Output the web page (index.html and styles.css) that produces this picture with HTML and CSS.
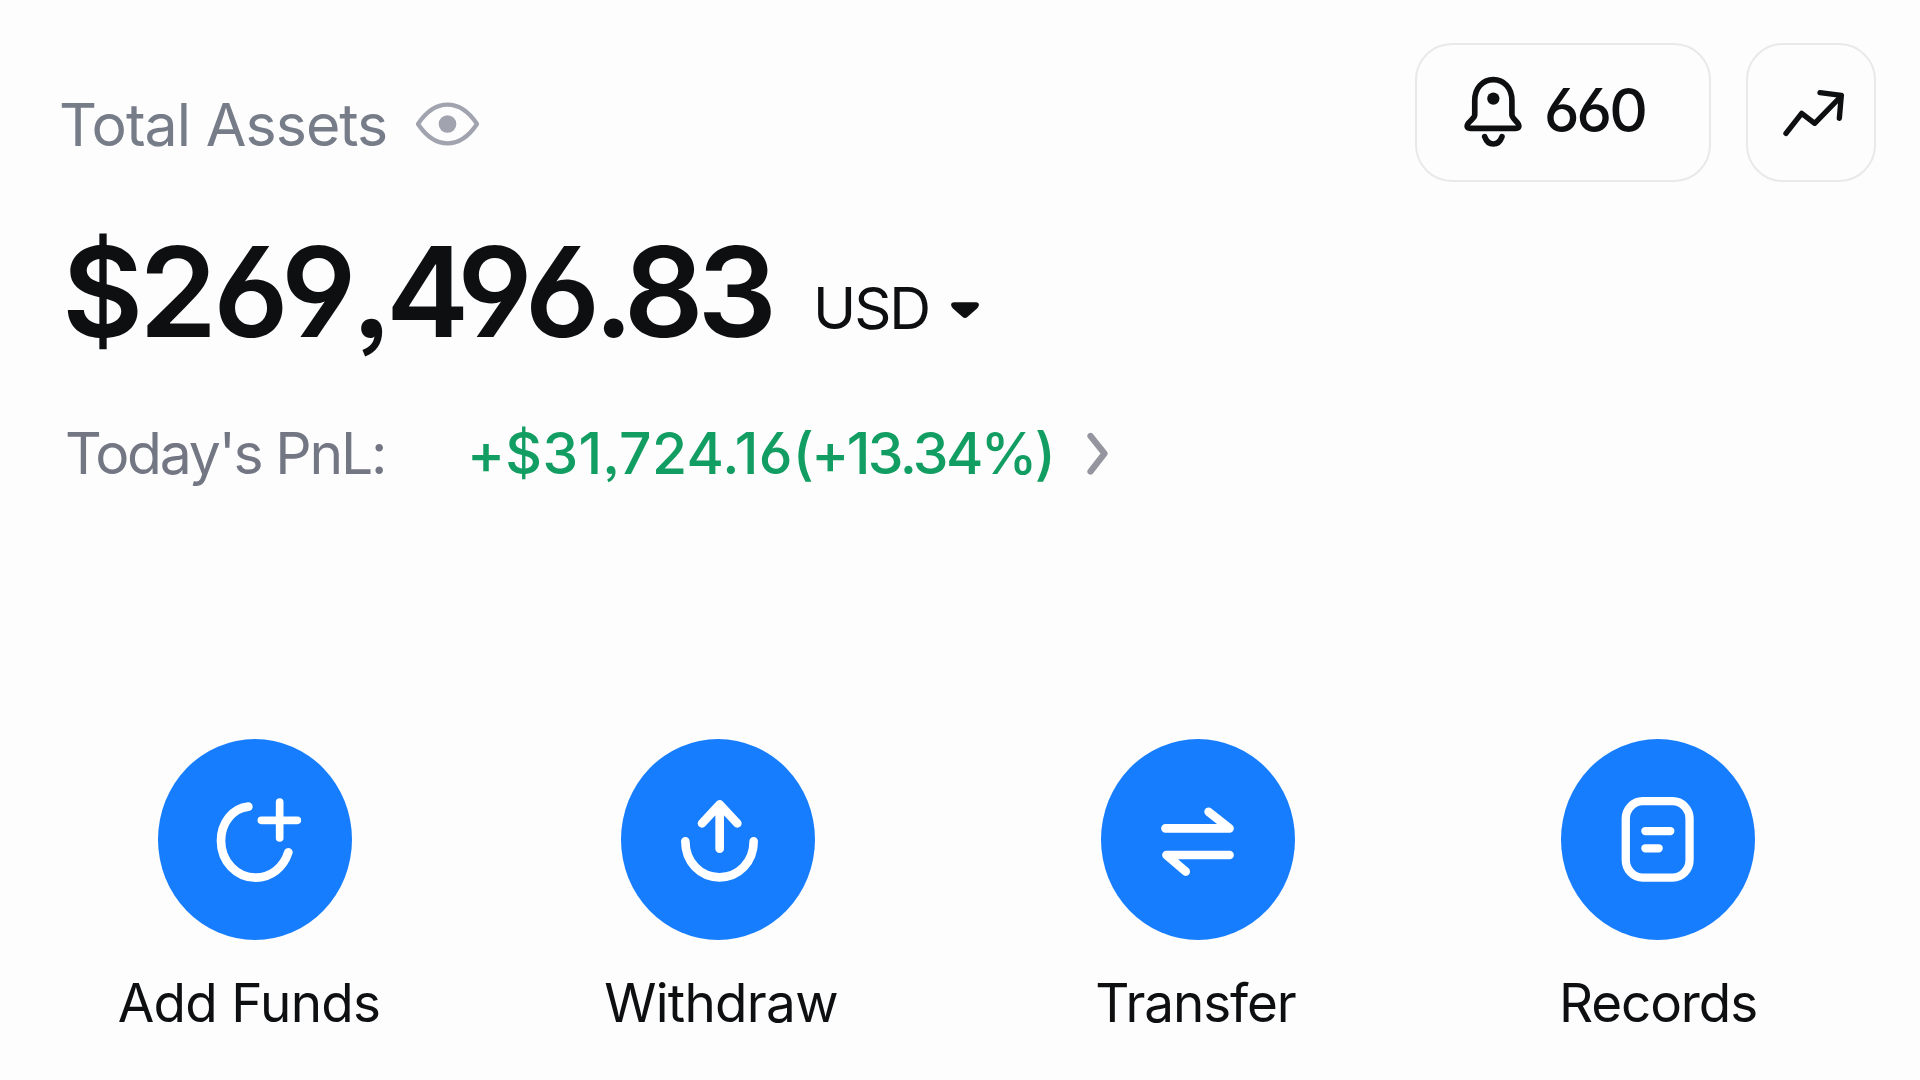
FILE: index.html
```html
<!DOCTYPE html>
<html lang="en">
<head>
<meta charset="utf-8">
<title>Assets</title>
<link rel="stylesheet" href="styles.css">
</head>
<body>
<main class="page">
  <header class="header">
    <div class="heading">
      <span class="heading-text">Total Assets</span>
      <svg class="eye" viewBox="0 0 189 132" fill="none">
        <path d="M6 66C30 30 60 8 94.500 8S159 30 183 66C159 102 129 124 94.500 124S30 102 6 66Z" stroke="#a1a4ae" stroke-width="13" stroke-linejoin="round"/>
        <circle cx="94.500" cy="66" r="26.500" fill="#a1a4ae"/>
      </svg>
    </div>
    <div class="tools">
      <button class="tool alerts">
        <svg class="bell" viewBox="190 135 180 220" fill="none" stroke="#0e0f11" stroke-width="17" stroke-linecap="round" stroke-linejoin="round">
          <path d="M225 255V212C225 174 249 149 281 149S337 174 337 212V255C337 268 358 276 358 289C358 294 354 296 348 296H212C206 296 202 294 202 289C202 276 225 268 225 255Z"/>
          <path d="M255 321C260 335 269 343 281 343S302 335 307 321"/>
          <circle cx="281" cy="206" r="18.500" fill="#0e0f11" stroke="none"/>
        </svg>
        <span class="count">660</span>
      </button>
      <button class="tool trend">
        <svg class="trend-icon" viewBox="1145 175 195 150" fill="none" stroke="#0e0f11" stroke-width="16" stroke-linecap="round" stroke-linejoin="round">
          <path d="M1157 311L1204 251L1243 281L1323 199M1259 189L1323 197L1317 266"/>
        </svg>
      </button>
    </div>
  </header>

  <section class="balance">
    <span class="amount">$269<span class="rest">,496.83</span></span>
    <span class="currency">USD</span>
    <svg class="caret" viewBox="0 0 84 50" fill="#0e0f11">
      <path d="M8 0H76Q84 1 84 8Q83 14 78 19L50 44Q42 51 34 44L6 19Q1 14 0 8Q0 1 8 0Z"/>
    </svg>
  </section>

  <section class="pnl">
    <span class="pnl-label">Today's PnL:</span>
    <span class="pnl-value">+$31,724.16<span class="percent">(+13.34%)</span></span>
    <svg class="chevron" viewBox="0 0 21 44" fill="none" stroke="#95959f" stroke-width="6.200" stroke-linecap="round" stroke-linejoin="round">
      <path d="M3.500 4L17.500 21.500L3.500 39.500"/>
    </svg>
  </section>

  <nav class="actions">
    <a class="action add">
      <svg class="disc" viewBox="175 55 580 603" fill="none" stroke="#fff" stroke-width="26" stroke-linecap="round" stroke-linejoin="round">
        <path d="M445 258C398 263 363 306 363 361C363 422 410 471 467 471C513 471 551 440 565 395"/>
        <path d="M539 244V352M484 299H592" stroke-width="23"/>
      </svg>
      <span class="label">Add Funds</span>
    </a>
    <a class="action withdraw">
      <svg class="disc" viewBox="93 55 582 603" fill="none" stroke="#fff" stroke-width="26" stroke-linecap="round" stroke-linejoin="round">
        <path d="M286 362C286 424 331 470 388.500 470S491 424 491 362"/>
        <path d="M389 384V252M336 308L389 251L442 308"/>
      </svg>
      <span class="label">Withdraw</span>
    </a>
    <a class="action transfer">
      <svg class="disc" viewBox="91 55 584 603" fill="none" stroke="#fff" stroke-width="26" stroke-linecap="round" stroke-linejoin="round">
        <path d="M285 323H478L415 273M478 403H288L346 453"/>
      </svg>
      <span class="label">Transfer</span>
    </a>
    <a class="action records">
      <svg class="disc" viewBox="91 55 584 603" fill="none" stroke="#fff" stroke-width="25" stroke-linecap="round">
        <rect x="286" y="241" width="192" height="230" rx="51" ry="53"/>
        <path d="M345 331H420M345 383H385"/>
      </svg>
      <span class="label">Records</span>
    </a>
  </nav>
</main>
</body>
</html>
```
FILE: styles.css
```css
* { box-sizing: border-box; }

body {
  margin: 0;
  background: #fdfdfd;
  color: #0e0f11;
  font-family: Inter, "Liberation Sans", sans-serif;
  font-feature-settings: "cv03", "cv04", "ss03";
}

.page {
  width: 1920px;
  height: 1080px;
  padding: 43px 44px 0 62px;
  overflow: hidden;
}

svg { display: block; flex: none; }
span { white-space: nowrap; }

.header {
  display: flex;
  justify-content: space-between;
  height: 139px;
}

.heading {
  display: flex;
  align-items: flex-start;
  padding-top: 52px;
  margin-left: -3px;
}

.heading-text {
  width: 357px;
  color: #777c89;
  font-size: 59px;
  line-height: 60px;
  letter-spacing: -0.95px;
}

.eye { width: 63px; height: 44px; margin-top: 7px; }

.tools { display: flex; gap: 35px; }

.tool {
  display: flex;
  align-items: flex-start;
  height: 139px;
  padding: 0;
  border: 2px solid #e9e9eb;
  border-radius: 37px;
  background: #fdfdfd;
  color: inherit;
  font: inherit;
  font-feature-settings: inherit;
}

.alerts { width: 296px; padding: 30px 0 0 46px; gap: 21px; }
.bell { width: 60px; height: 73px; }
.count {
  margin-top: 5px;
  font-size: 60px;
  font-weight: 500;
  line-height: 60px;
  letter-spacing: -3px;
}

.trend { width: 130px; padding: 43px 0 0 34px; }
.trend-icon { width: 65px; height: 50px; }

.balance {
  display: flex;
  align-items: flex-start;
  height: 130px;
  margin-top: 45px;
}

.amount {
  width: 751px;
  font-size: 125px;
  font-weight: 600;
  line-height: 130px;
  letter-spacing: -4px;
}

.rest { letter-spacing: -6.5px; }

.currency {
  width: 138px;
  margin-top: 51px;
  font-size: 58px;
  line-height: 60px;
  letter-spacing: -2px;
}

.caret { width: 28px; height: 17px; margin-top: 75px; }

.pnl {
  display: flex;
  align-items: flex-start;
  height: 60px;
  margin-top: 67px;
  font-size: 57px;
  line-height: 60px;
}

.pnl-label {
  width: 405px;
  padding-left: 3px;
  color: #737784;
  letter-spacing: -2.2px;
}

.pnl-value {
  width: 620px;
  color: #129d63;
  font-weight: 500;
  letter-spacing: 0.3px;
}

.percent { letter-spacing: -2.6px; }

.chevron { width: 21px; height: 44px; margin-top: 8px; }

.actions {
  display: grid;
  grid-template-columns: 463px 480px 460px 260px;
  margin: 255px 0 0 63px;
}

.action {
  display: flex;
  flex-direction: column;
  align-items: center;
  width: 260px;
}

.disc {
  width: 194px;
  height: 201px;
  border-radius: 50%;
  background: #167dff;
}

.label {
  margin-top: 33px;
  font-size: 53px;
  line-height: 60px;
  letter-spacing: -0.9px;
}

.add .label { margin-left: -12px; letter-spacing: -0.7px; }
.withdraw .label { margin-left: 6px; letter-spacing: -0.7px; }
.transfer .label { margin-left: -5px; letter-spacing: -1.1px; }
.records .label { margin-left: 0; letter-spacing: -1.1px; }
```
